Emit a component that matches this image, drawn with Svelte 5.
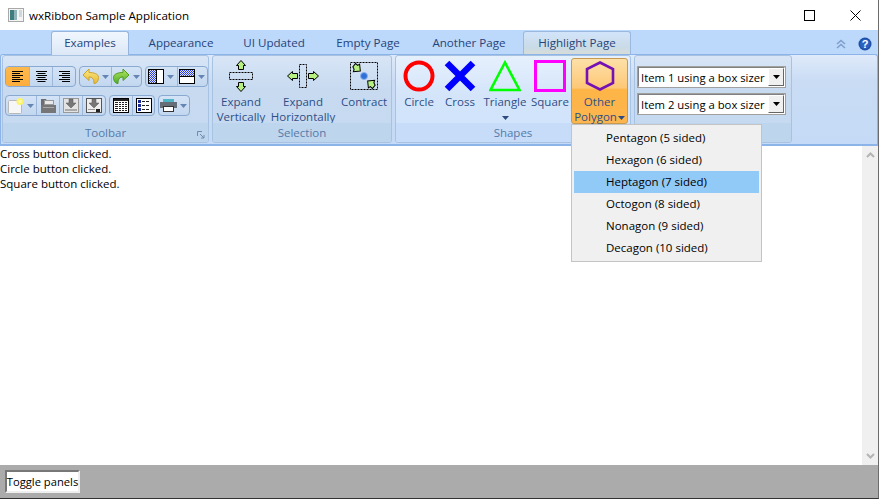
<script>
  const tabs = [
    { label: 'Examples', w: 78, cls: 'active' },
    { label: 'Appearance', w: 96, gap: 4 },
    { label: 'UI Updated', w: 90 },
    { label: 'Empty Page', w: 98 },
    { label: 'Another Page', w: 104 },
    { label: 'Highlight Page', w: 108, gap: 2, cls: 'hl' }
  ];
  const log = ['Cross button clicked.', 'Circle button clicked.', 'Square button clicked.'];
  const menu = ['Pentagon (5 sided)', 'Hexagon (6 sided)', 'Heptagon (7 sided)', 'Octogon (8 sided)', 'Nonagon (9 sided)', 'Decagon (10 sided)'];
  const alignLong = 11;
  const alignShort = 8;
  const alignRows = [alignLong, alignShort, alignLong, alignShort, alignLong, alignShort];
</script>

{#snippet caret()}
  <svg class="caret" width="7" height="4" viewBox="0 0 7 4"><path d="M0 0h7L3.500 4z" fill="#6585b5"/></svg>
{/snippet}

{#snippet align(kind)}
  <svg width="11" height="12" viewBox="0 0 11 12">
    {#each alignRows as w, i}
      <rect x={kind === 'left' ? 0 : kind === 'right' ? 11 - w : 5.5 - w / 2} y={i * 2} width={w} height="1" fill="#000"/>
    {/each}
  </svg>
{/snippet}

<div class="window">
  <header class="titlebar">
    <svg class="appicon" width="16" height="16" viewBox="0 0 16 16">
      <rect x=".5" y="1.500" width="15" height="13" fill="#f4f4f4" stroke="#a8a8a8"/>
      <rect x="2" y="3" width="4" height="10" fill="#3d7d7f"/>
      <rect x="6" y="3" width="3" height="10" fill="#8fb3b8"/>
      <rect x="11" y="3" width="3" height="7" fill="#cfd8d8"/>
    </svg>
    <span class="title">wxRibbon Sample Application</span>
    <div class="winbtns">
      <span class="winbtn"></span>
      <span class="winbtn">
        <svg width="11" height="11" viewBox="0 0 11 11"><rect x=".5" y=".5" width="10" height="10" fill="none" stroke="#000"/></svg>
      </span>
      <span class="winbtn">
        <svg width="11" height="11" viewBox="0 0 11 11"><path d="M.5.5l10 10M10.500.5l-10 10" stroke="#000" fill="none"/></svg>
      </span>
    </div>
  </header>

  <section class="ribbon">
    <nav class="tabbar">
      {#each tabs as t}
        <span class="tab {t.cls ?? ''}" style:width="{t.w}px" style:margin-left="{t.gap ?? 0}px">{t.label}</span>
      {/each}
      <span class="tabicons">
        <svg width="10" height="10" viewBox="0 0 10 10"><path d="M1 5l4-3.500L9 5M1 9l4-3.500L9 9" fill="none" stroke="#7f9fcb" stroke-width="1.600"/></svg>
        <svg width="14" height="14" viewBox="0 0 14 14"><circle cx="7" cy="7" r="6.500" fill="#1f4fa8"/><circle cx="7" cy="7" r="5" fill="#2c62c0"/><text x="7" y="11" text-anchor="middle" class="qmark">?</text></svg>
      </span>
    </nav>

    <div class="page">
      <svg class="defs" width="0" height="0">
        <defs>
          <pattern id="hatch" width="2" height="2" patternUnits="userSpaceOnUse">
            <rect width="2" height="2" fill="#dfe4fb"/>
            <rect width="1" height="1" fill="#2e3fe0"/>
            <rect x="1" y="1" width="1" height="1" fill="#2e3fe0"/>
          </pattern>
          <linearGradient id="gold" x1="0" y1="0" x2="0" y2="1"><stop offset="0" stop-color="#fbe98a"/><stop offset="1" stop-color="#e8b92f"/></linearGradient>
          <linearGradient id="lime" x1="0" y1="0" x2="0" y2="1"><stop offset="0" stop-color="#b6e65e"/><stop offset="1" stop-color="#4fae2a"/></linearGradient>
        </defs>
      </svg>
      <div class="panel toolbar">
        <div class="panelbody tools">
          <div class="toolrow">
            <div class="group">
              <span class="tb sel">{@render align('left')}</span>
              <span class="tb">{@render align('center')}</span>
              <span class="tb">{@render align('right')}</span>
            </div>
            <div class="group">
              <span class="tb wide">
                <svg width="17" height="17" viewBox="0 0 17 17"><path d="M7 1 1 7l6 5.500V9c3 0 5 1.500 5 6.500 3 0 4.500-3 4.500-6C16.500 6 12 4.500 7 4.500z" fill="url(#gold)" stroke="#c9a22c"/></svg>
                {@render caret()}
              </span>
              <span class="tb wide">
                <svg width="17" height="17" viewBox="0 0 17 17"><path d="M10 1l6 6-6 5.500V9c-3 0-5 1.500-5 6.500-3 0-4.500-3-4.500-6C.5 6 5 4.500 10 4.500z" fill="url(#lime)" stroke="#4e9a22"/></svg>
                {@render caret()}
              </span>
            </div>
            <div class="group">
              <span class="tb wide">
                <svg width="16" height="15" viewBox="0 0 16 15"><rect x=".5" y=".5" width="15" height="14" fill="#fff" stroke="#000"/><rect x="1" y="1" width="7" height="13" fill="url(#hatch)"/><path d="M8.500 0v15" stroke="#000"/></svg>
                {@render caret()}
              </span>
              <span class="tb wide">
                <svg width="16" height="15" viewBox="0 0 16 15"><rect x=".5" y=".5" width="15" height="14" fill="#fff" stroke="#000"/><rect x="1" y="1" width="14" height="6" fill="url(#hatch)"/><path d="M0 7.500h16" stroke="#000"/></svg>
                {@render caret()}
              </span>
            </div>
          </div>
          <div class="toolrow">
            <div class="group g1">
              <span class="tb newdoc">
                <svg width="16" height="16" viewBox="0 0 16 16"><rect x=".5" y="2.500" width="13" height="13" rx="1" fill="#f6f6f6" stroke="#b9b9b9"/><circle cx="12" cy="3.500" r="3.500" fill="#fbf46a"/><circle cx="12" cy="3.500" r="1.500" fill="#fff9b0"/></svg>
                {@render caret()}
              </span>
              <span class="tb">
                <svg width="17" height="15" viewBox="0 0 17 15"><path d="M1 1h5l1 2h7v4H1z" fill="#6d6d6d"/><rect x="4.500" y="2.500" width="9" height="4" fill="#e9e9e9" stroke="#999"/><rect x="1" y="7" width="15" height="8" fill="#767676"/><rect x="3" y="9" width="11" height="1" fill="#a8a8a8"/></svg>
              </span>
              <span class="tb">
                <svg width="16" height="15" viewBox="0 0 16 15"><rect x=".5" y=".5" width="15" height="14" fill="#e3e3e3" stroke="#9a9a9a"/><path d="M6 1h4v4h3l-5 5-5-5h3z" fill="#777" stroke="#555" stroke-width=".5"/><rect x="2" y="11" width="12" height="2" fill="#aaa"/></svg>
              </span>
              <span class="tb">
                <svg width="16" height="15" viewBox="0 0 16 15"><rect x=".5" y=".5" width="15" height="14" fill="#eee" stroke="#555"/><path d="M6 1h4v4h3l-5 5-5-5h3z" fill="#777" stroke="#555" stroke-width=".5"/><rect x="10" y="11" width="4" height="3" fill="#222"/><rect x="2" y="11" width="7" height="1" fill="#999"/></svg>
              </span>
            </div>
            <div class="group g2">
              <span class="tb">
                <svg width="16" height="15" viewBox="0 0 16 15"><rect x=".5" y=".5" width="15" height="14" fill="#fff" stroke="#000"/><rect x="1" y="1" width="14" height="2" fill="#222"/><path d="M2 4.500h12M2 6.500h12M2 8.500h12M2 10.500h12M2 12.500h12" stroke="#222"/><path d="M5.500 4v9M8.500 4v9M11.500 4v9" stroke="#fff"/></svg>
              </span>
              <span class="tb">
                <svg width="16" height="15" viewBox="0 0 16 15"><rect x=".5" y=".5" width="15" height="14" fill="#fff" stroke="#000"/><path d="M2 2h3v3H2zM2 6h3v3H2zM2 10h3v3H2z" fill="#1a2a9a"/><path d="M6 3.500h8M6 7.500h8M6 11.500h8" stroke="#222" stroke-dasharray="3 1"/></svg>
              </span>
            </div>
            <div class="group g3">
              <span class="tb wide2">
                <svg width="17" height="13" viewBox="0 0 17 13"><rect x="0" y="3" width="17" height="6" fill="#666f78"/><rect x="3" y="0" width="11" height="3" fill="#4fb6c8"/><rect x="3.500" y="7.500" width="10" height="5" fill="#fff" stroke="#333"/></svg>
                {@render caret()}
              </span>
            </div>
          </div>
        </div>
        <footer class="panellabel">
          Toolbar
          <svg class="launch" width="8" height="8" viewBox="0 0 8 8"><path d="M.5 5V.5H5M3 3l4 4M7 4v3H4" fill="none" stroke="#6f8bb0"/></svg>
        </footer>
      </div>

      <div class="panel selection">
        <div class="panelbody large">
          <div class="lbtn" style:width="54px">
            <svg width="32" height="32" viewBox="0 0 32 32">
              <path d="M11.500 5.500 16 .5l4.500 5H18.500v4h-5v-4z" fill="#b6f080" stroke="#000"/>
              <rect x="4.500" y="12.500" width="23" height="7" fill="none" stroke="#000" stroke-dasharray="2 1"/>
              <path d="M11.500 26.500 16 31.500l4.500-5H18.500v-4h-5v4z" fill="#b6f080" stroke="#000"/>
            </svg>
            <span class="ltxt">Expand<br/>Vertically</span>
          </div>
          <div class="lbtn" style:width="70px">
            <svg width="32" height="32" viewBox="0 0 32 32">
              <path d="M5.500 11.500 .5 16l5 4.500v-2h5v-5h-5z" fill="#b6f080" stroke="#000"/>
              <rect x="12.500" y="4.500" width="7" height="23" fill="none" stroke="#000" stroke-dasharray="2 1"/>
              <path d="M26.500 11.500 31.500 16l-5 4.500v-2h-5v-5h5z" fill="#b6f080" stroke="#000"/>
            </svg>
            <span class="ltxt">Expand<br/>Horizontally</span>
          </div>
          <div class="lbtn" style:width="52px">
            <svg width="32" height="32" viewBox="0 0 32 32">
              <rect x="2.500" y="2.500" width="27" height="27" fill="none" stroke="#000" stroke-dasharray="2 1"/>
              <path d="M5 6.500 8 3.500l2 2 2-1v7h-7l1-2.500z" transform="rotate(-6 8 8)" fill="#b6f080" stroke="#000"/>
              <path d="M27 25.500 24 28.500l-2-2-2 1v-7h7l-1 2.500z" transform="rotate(-6 24 24)" fill="#b6f080" stroke="#000"/>
              <circle cx="16" cy="16" r="3.500" fill="#2f6fd8" stroke="#8ab2ea"/>
            </svg>
            <span class="ltxt">Contract</span>
          </div>
        </div>
        <footer class="panellabel">Selection</footer>
      </div>

      <div class="panel shapes">
        <div class="panelbody large">
          <div class="lbtn" style:width="44px">
            <svg width="32" height="32" viewBox="0 0 32 32"><circle cx="16" cy="16" r="13.500" fill="none" stroke="#f00" stroke-width="4"/></svg>
            <span class="ltxt">Circle</span>
          </div>
          <div class="lbtn" style:width="38px">
            <svg width="32" height="32" viewBox="0 0 32 32"><path d="M3 3l26 26M29 3L3 29" fill="none" stroke="#00f" stroke-width="6.500"/></svg>
            <span class="ltxt">Cross</span>
          </div>
          <div class="lbtn" style:width="52px">
            <svg width="32" height="32" viewBox="0 0 32 32"><path d="M16 2.500 30.500 30H1.500z" fill="none" stroke="#0f0" stroke-width="2.600"/></svg>
            <span class="ltxt">Triangle<br/><svg class="caret dark" width="7" height="4" viewBox="0 0 7 4"><path d="M0 0h7L3.500 4z" fill="#2d4a80"/></svg></span>
          </div>
          <div class="lbtn" style:width="38px">
            <svg width="32" height="32" viewBox="0 0 32 32"><rect x="1.500" y="1.500" width="29" height="29" fill="none" stroke="#f0f" stroke-width="3"/></svg>
            <span class="ltxt">Square</span>
          </div>
          <div class="lbtn hot">
            <svg width="32" height="32" viewBox="0 0 32 32"><path d="M16 2.500 29 9v14l-13 6.500L3 23V9z" fill="none" stroke="#7410b4" stroke-width="2.600"/></svg>
            <span class="ltxt">Other<br/>Polygon<svg class="caret inline" width="7" height="4" viewBox="0 0 7 4"><path d="M0 0h7L3.500 4z" fill="#2d4a80"/></svg></span>
          </div>
        </div>
        <footer class="panellabel">Shapes</footer>
      </div>

      <div class="panel sizer">
        <div class="panelbody combos">
          {#each ['Item 1 using a box sizer', 'Item 2 using a box sizer'] as item}
            <div class="combo">
              <span class="combotext">{item}</span>
              <span class="combobtn"><svg width="7" height="4" viewBox="0 0 7 4"><path d="M0 0h7L3.500 4z" fill="#000"/></svg></span>
            </div>
          {/each}
        </div>
        <footer class="panellabel"></footer>
      </div>
    </div>
  </section>

  <main class="content">
    <div class="log">
      {#each log as line}<div>{line}</div>{/each}
    </div>
    <aside class="scrollbar">
      <svg width="9" height="6" viewBox="0 0 9 6"><path d="M1 5l3.500-3.500L8 5" fill="none" stroke="#b4b4b4" stroke-width="2"/></svg>
      <svg width="9" height="6" viewBox="0 0 9 6"><path d="M1 1l3.500 3.500L8 1" fill="none" stroke="#b4b4b4" stroke-width="2"/></svg>
    </aside>
  </main>

  <footer class="bottom">
    <span class="toggle">Toggle panels</span>
  </footer>

  <div class="menu">
    {#each menu as m, i}
      <div class="menuitem" class:hover={i === 2}>{m}</div>
    {/each}
  </div>
</div>

<style>
  :global(body) { margin: 0; overflow: hidden; background: #fff; }
  .window {
    position: relative; width: 879px; height: 499px; display: flex; flex-direction: column;
    font-family: "Open Sans", "Noto Sans", sans-serif; font-size: 11.5px; color: #000; overflow: hidden;
    border-right: 1px solid #6b6b6b; border-bottom: 1px solid #333; box-sizing: border-box;
  }
  .titlebar { height: 30px; flex: none; display: flex; align-items: center; background: #fff; }
  .appicon { margin-left: 8px; }
  .title { margin-left: 5px; font-size: 11.6px; }
  .winbtns { margin-left: auto; display: flex; }
  .winbtn { width: 46px; height: 30px; display: flex; align-items: center; justify-content: center; }

  .ribbon { height: 116px; flex: none; display: flex; flex-direction: column; background: #bcd8fb; border-bottom: 2px solid #8db4e8; box-sizing: border-box; }
  .tabbar { height: 24px; flex: none; display: flex; padding: 1px 0 0 51px; box-sizing: border-box; position: relative; color: #27447a; }
  .tab { display: flex; align-items: center; justify-content: center; box-sizing: border-box; flex: none; height: 23px; font-size: 11.6px; padding-bottom: 1px; }
  .tab.active { background: linear-gradient(#f0f6fd, #dce8f7); border: 1px solid #96b5dc; border-bottom: none; border-radius: 3px 3px 0 0; z-index: 1; height: 24px; padding-bottom: 2px; }
  .tab.hl { background: linear-gradient(#d2e4fa, #c9dbe6 70%, #d8dcd8); border: 1px solid #9bb9df; border-bottom: none; border-radius: 3px 3px 0 0; }
  .tabicons { position: absolute; right: 6px; top: 7px; display: flex; gap: 12px; align-items: center; }
  .qmark { font-size: 11px; font-weight: 700; fill: #fff; font-family: "Liberation Sans", sans-serif; }

  .page { flex: 1; min-height: 0; display: flex; gap: 3px; padding: 0 2px 1px 2px; background: linear-gradient(#dfeafa, #c9dcf4 30%, #c4daf6); border: 1px solid #8db4e8; border-width: 1px 1px 0 1px; border-radius: 3px 3px 0 0; box-sizing: border-box; }
  .defs { position: absolute; }
  .panel { flex: none; display: flex; flex-direction: column; border: 1px solid #a8c2e2; border-radius: 3px; box-sizing: border-box; overflow: hidden; background: linear-gradient(#d8e5f6, #c7daf0 40%, #c5d9f0); }
  .toolbar { width: 207px; margin-left: -1px; }
  .selection { width: 180px; }
  .shapes { width: 236px; background: linear-gradient(#e6f0fd, #d4e5fa 45%, #cfe3fb); }
  .sizer { width: 158px; }
  .panelbody { flex: 1; min-height: 0; }
  .panellabel { height: 19px; flex: none; display: flex; align-items: center; justify-content: center; position: relative; background: #bed5ee; color: #567aa8; font-size: 11.5px; box-sizing: border-box; }
  .shapes .panellabel { background: #c6dcf8; }
  .launch { position: absolute; right: 3px; bottom: 3px; }

  .tools { padding: 10px 0 0 2px; display: flex; flex-direction: column; gap: 8px; box-sizing: border-box; }
  .toolrow { display: flex; gap: 3px; }
  .group { display: flex; height: 21px; border: 1px solid #8aa9d0; border-radius: 4px; overflow: hidden; box-sizing: border-box; background: linear-gradient(#d4e3f6, #c2d7ef); }
  .tb { width: 23px; display: flex; align-items: center; justify-content: center; gap: 3px; box-sizing: border-box; border-left: 1px solid #9db7d8; flex: none; }
  .tb:first-child { border-left: none; }
  .tb.sel { background: linear-gradient(#fdb84d, #fcae3c); }
  .tb.wide { width: 30.5px; }
  .tb.newdoc { width: 30px; }
  .tb.wide2 { width: 29.5px; }
  .g2 .tb { width: 22px; }
  .caret { flex: none; }

  .large { display: flex; align-items: flex-start; padding: 2px 0 0 1px; box-sizing: border-box; }
  .lbtn { display: flex; flex-direction: column; align-items: center; flex: none; box-sizing: border-box; color: #2f4f87; padding-top: 2px; }
  .lbtn > svg { flex: none; }
  .ltxt { text-align: center; line-height: 15px; margin-top: 2px; white-space: nowrap; flex: none; }
  .caret.dark { vertical-align: middle; }
  .caret.inline { vertical-align: middle; margin-left: 1px; }
  .hot { width: 57px; height: 66px; margin-left: 2px; padding-top: 1px; background: linear-gradient(#fde0a8, #fdc877 45%, #fdb547 48%, #fdb54f); border: 1px solid #c69a50; border-radius: 3px; z-index: 2; }

  .combos { padding: 10px 0 0 2px; display: flex; flex-direction: column; gap: 5px; box-sizing: border-box; }
  .combo { width: 149px; height: 22px; display: flex; align-items: center; justify-content: space-between; background: #fff; border: 2px solid; border-color: #808080 #fff #fff #808080; outline: 1px solid #a0a0a0; outline-offset: -1px; box-sizing: border-box; }
  .combotext { padding-left: 2px; white-space: nowrap; font-size: 11.3px; }
  .combobtn { width: 16px; height: 18px; display: flex; align-items: center; justify-content: center; background: #f0f0f0; border: 1px solid; border-color: #fff #666 #666 #fff; box-sizing: border-box; }

  .content { flex: 1; min-height: 0; display: flex; background: #fff; }
  .log { flex: 1; line-height: 15px; }
  .scrollbar { width: 16px; flex: none; background: #f0f0f0; display: flex; flex-direction: column; justify-content: space-between; align-items: center; padding: 6px 0; box-sizing: border-box; }

  .bottom { height: 33px; flex: none; background: #ababab; display: flex; align-items: flex-start; padding: 5px 0 0 5px; box-sizing: border-box; }
  .toggle { width: 75px; height: 23px; display: flex; align-items: center; justify-content: center; background: #fff; border: 2px solid; border-color: #777 #eee #eee #777; box-sizing: border-box; white-space: nowrap; font-size: 11.2px; }

  .menu { position: absolute; left: 571px; top: 124px; width: 191px; height: 138px; padding: 2px; background: #f0f0f0; border: 1px solid #c4c4c4; box-sizing: border-box; z-index: 5; }
  .menuitem { height: 22px; line-height: 22px; padding-left: 32px; }
  .menuitem.hover { background: #91c9f7; }
</style>
